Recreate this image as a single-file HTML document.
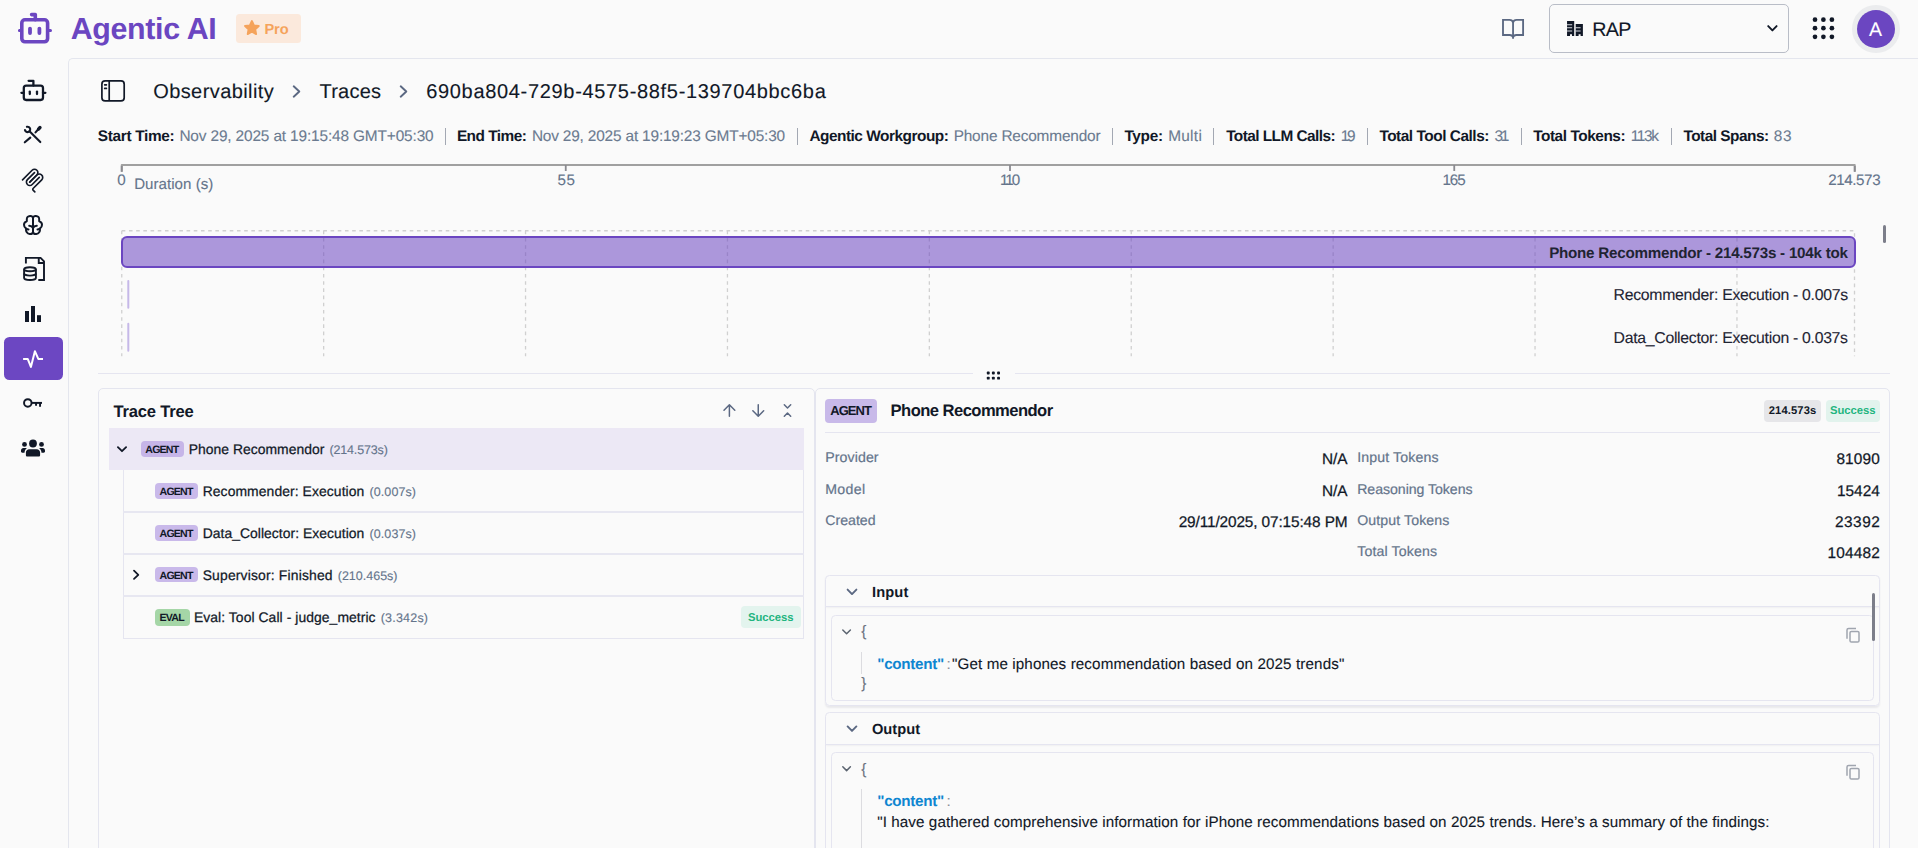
<!DOCTYPE html>
<html><head><meta charset="utf-8"><title>Agentic AI</title>
<style>
html,body{margin:0;padding:0;}
body{width:1918px;height:848px;overflow:hidden;background:#fafafa;font-family:"Liberation Sans", sans-serif;position:relative;}
.t{position:absolute;white-space:pre;font-family:"Liberation Sans", sans-serif;text-rendering:geometricPrecision;}
.a{position:absolute;box-sizing:border-box;}
svg{position:absolute;overflow:visible;}
</style></head><body>
<!-- main content frame -->
<div class="a" style="left:68px;top:58px;width:1860px;height:800px;border-top:1px solid #e4e6ee;border-left:1px solid #e4e6ee;border-top-left-radius:5px;"></div>

<!-- logo -->
<svg style="left:0;top:0" width="70" height="58" viewBox="0 0 70 58" fill="none" stroke="#6b46c1" stroke-width="3.6" stroke-linecap="round" stroke-linejoin="round">
  <rect x="21.8" y="19.8" width="25.8" height="22" rx="3.2"/>
  <path d="M35.3 19.8V14.6H31.6"/>
  <path d="M19.4 30.4h1.9M48.6 30.4h1.9" stroke-width="3"/>
  <path d="M30 28.6v4.4M39.4 28.6v4.4" stroke-width="3.8"/>
</svg>

<!-- Pro badge -->
<div class="a" style="left:236px;top:14px;width:65px;height:28.75px;background:#fbe9dc;border-radius:3.5px;"></div>
<svg style="left:241.5px;top:18.3px" width="19.8" height="19.8" viewBox="0 0 24 24" fill="#f5a35b" stroke="#f5a35b" stroke-width="2.2" stroke-linejoin="round">
  <path d="M12 3.6l2.55 5.3 5.8.8-4.22 4.05 1.02 5.75L12 16.75 6.85 19.5l1.02-5.75L3.65 9.7l5.8-.8z"/>
</svg>

<!-- book icon -->
<svg style="left:1499px;top:15px" width="28" height="28" viewBox="1499 15 28 28" fill="none" stroke="#5b6882" stroke-width="1.85" stroke-linejoin="miter" stroke-linecap="butt">
  <path d="M1513.05 22.4C1512.6 20.7 1511.4 19.9 1509.6 19.9H1503V35H1509.8C1511.4 35 1512.6 35.7 1513.05 37.3"/>
  <path d="M1513.05 22.4C1513.5 20.7 1514.7 19.9 1516.5 19.9H1523.1V35H1516.3C1514.7 35 1513.5 35.7 1513.05 37.3"/>
  <path d="M1513.05 22V38.7"/>
</svg>

<!-- select box -->
<div class="a" style="left:1549px;top:4px;width:240px;height:49px;border:1px solid #b9bdc7;border-radius:5px;"></div>
<!-- building icon -->
<svg style="left:1566px;top:20px" width="18" height="17" viewBox="0 0 18 17">
  <path fill="#111827" d="M1.05 1h7.15v14.9H6v-1.6H4v1.6H1.05zM9.7 4h7.2v11.9h-2.3v-1.6h-2v1.6H9.7z"/>
  <path stroke="#d6d8dd" stroke-width="1.1" d="M1.05 4.75h5.1M1.05 7.8h5.1M1.05 11h5.1M9.2 7.8h5.4M9.2 11h5.4"/>
</svg>
<!-- select chevron -->
<svg style="left:1764px;top:20px" width="17" height="17" viewBox="0 0 17 17" fill="none" stroke="#111827" stroke-width="1.9" stroke-linecap="round" stroke-linejoin="round">
  <path d="M4.2 6.1l4.2 4.3 4.2-4.3"/>
</svg>
<!-- grid dots -->
<svg style="left:1810px;top:15px" width="28" height="28" viewBox="0 0 28 28" fill="#111827">
  <circle cx="5" cy="4.7" r="2.35"/><circle cx="13.4" cy="4.7" r="2.35"/><circle cx="21.9" cy="4.7" r="2.35"/>
  <circle cx="5" cy="13.2" r="2.35"/><circle cx="13.4" cy="13.2" r="2.35"/><circle cx="21.9" cy="13.2" r="2.35"/>
  <circle cx="5" cy="21.8" r="2.35"/><circle cx="13.4" cy="21.8" r="2.35"/><circle cx="21.9" cy="21.8" r="2.35"/>
</svg>
<!-- avatar -->
<div class="a" style="left:1852.3px;top:5.2px;width:47.4px;height:47.4px;border-radius:50%;background:#ebecee;"></div>
<div class="a" style="left:1857px;top:9.9px;width:38px;height:38px;border-radius:50%;background:#6b46c1;"></div>

<!-- ===== sidebar icons ===== -->
<!-- 1 bot (lucide) -->
<svg style="left:18.9px;top:75.9px" width="28.8" height="28.8" viewBox="0 0 24 24" fill="none" stroke="#111827" stroke-width="1.9" stroke-linecap="round" stroke-linejoin="round">
  <path d="M12 8V4H8"/><rect width="16" height="12" x="4" y="8" rx="2"/><path d="M2 14h2"/><path d="M20 14h2"/><path d="M15 13v2"/><path d="M9 13v2"/>
</svg>
<!-- 2 tools -->
<svg style="left:18px;top:120px" width="30" height="30" viewBox="18 120 30 30" fill="none" stroke="#111827" stroke-width="2.1" stroke-linecap="round" stroke-linejoin="round">
  <path d="M26.9 126.85A2.65 2.65 0 1 1 24.95 129.95"/>
  <path d="M29.5 131.3L40.3 142.1"/>
  <path d="M30.3 137.6L24.8 142.3"/>
  <path d="M35.5 132.4L39 128.5"/>
  <path d="M38.5 129.1L40 127.5" stroke-width="3.3"/>
</svg>
<!-- 3 MCP -->
<svg style="left:19.3px;top:165.6px" width="27.5" height="27.5" viewBox="0 0 195 195" fill="none" stroke="#111827" stroke-width="11.6" stroke-linecap="round">
  <path d="M25 97.8528L92.8823 29.9706C102.255 20.598 117.451 20.598 126.823 29.9706C136.196 39.3431 136.196 54.5391 126.823 63.9117L75.5581 115.177"/>
  <path d="M76.2653 114.47L126.823 63.9117C136.196 54.5391 151.392 54.5391 160.765 63.9117L161.118 64.2652C170.491 73.6378 170.491 88.8338 161.118 98.2063L99.7248 159.6C96.6006 162.724 96.6006 167.789 99.7248 170.913L112.331 183.52"/>
  <path d="M109.853 46.9411L59.6482 97.1457C50.2757 106.518 50.2757 121.714 59.6482 131.087C69.0208 140.459 84.2168 140.459 93.5894 131.087L143.794 80.8822"/>
</svg>
<!-- 4 brain -->
<svg style="left:18px;top:210px" width="30" height="30" viewBox="-15 -15 30 30" fill="none" stroke="#111827" stroke-width="2" stroke-linecap="round" stroke-linejoin="round">
  <path d="M0 -7.4V7.4"/>
  <path d="M0 -7.2C0.3 -8.6 1.6 -9.2 3 -9.1C5 -9 6.3 -7.6 6.2 -5.6V-3.8C8 -3.3 9 -1.8 9 -0.2C9 1.6 8.2 2.8 6.9 3.6C7.4 6.4 5.8 8.9 3.3 9.1C1.4 9.2 0.2 8.1 0 7"/>
  <path d="M6.9 3.6C6.2 4 5.4 4.4 4.5 4.5"/>
  <path d="M0 3C0.6 1.6 2 0.9 3.8 0.8"/>
  <path d="M0 -7.2C-0.3 -8.6 -1.6 -9.2 -3 -9.1C-5 -9 -6.3 -7.6 -6.2 -5.6V-3.8C-8 -3.3 -9 -1.8 -9 -0.2C-9 1.6 -8.2 2.8 -6.9 3.6C-7.4 6.4 -5.8 8.9 -3.3 9.1C-1.4 9.2 -0.2 8.1 0 7"/>
  <path d="M-6.9 3.6C-6.2 4 -5.4 4.4 -4.5 4.5"/>
  <path d="M0 3C-0.6 1.6 -2 0.9 -3.8 0.8"/>
</svg>
<!-- 5 file database -->
<svg style="left:18px;top:253px" width="32" height="32" viewBox="18 253 32 32" fill="none" stroke="#111827" stroke-width="1.9" stroke-linecap="butt" stroke-linejoin="miter">
  <path d="M25.9 263.4V257.9H40.6L44 261.3V280H38.3"/>
  <path d="M38.75 257.9V263H44"/>
  <ellipse cx="30" cy="269.3" rx="5.9" ry="2"/>
  <path d="M24.1 269.3V278C24.1 279.1 26.7 280 30 280S35.9 279.1 35.9 278V269.3"/>
  <path d="M24.1 273.6C24.1 274.7 26.7 275.6 30 275.6S35.9 274.7 35.9 273.6"/>
</svg>
<!-- 6 bars -->
<svg style="left:18px;top:298px" width="32" height="32" viewBox="18 298 32 32" fill="#111827">
  <rect x="25" y="311" width="4" height="11"/><rect x="31" y="306" width="4" height="16"/><rect x="37" y="315.2" width="4" height="6.8"/>
</svg>
<!-- 7 active -->
<div class="a" style="left:4px;top:337px;width:59px;height:43px;border-radius:5.5px;background:#6c47c2;"></div>
<svg style="left:18px;top:343px" width="32" height="32" viewBox="18 343 32 32" fill="none" stroke="#ffffff" stroke-width="2" stroke-linecap="butt" stroke-linejoin="round">
  <path d="M23.1 358.9H27.7L30.9 366.9L34.9 351.2L38.3 358.9H43"/>
</svg>
<!-- 8 key -->
<svg style="left:18px;top:387px" width="32" height="32" viewBox="18 387 32 32" fill="none" stroke="#111827" stroke-width="1.95">
  <circle cx="27.8" cy="402.9" r="3.75"/>
  <path d="M31.5 402.9H42"/>
  <path d="M36.05 402.9V405.7M40.05 402.9V406.8"/>
</svg>
<!-- 9 users -->
<svg style="left:18px;top:432px" width="32" height="32" viewBox="18 432 32 32" fill="#111827">
  <circle cx="33" cy="443.5" r="3.9"/>
  <path d="M29.3 449.2h7.4c1.9 0 3.4 1.5 3.4 3.4v2.6c0 .7-.6 1.3-1.3 1.3H27.2c-.7 0-1.3-.6-1.3-1.3v-2.6c0-1.9 1.500-3.4 3.400-3.4z"/>
  <circle cx="24.5" cy="444.45" r="2.4"/><circle cx="41.5" cy="444.45" r="2.4"/>
  <path d="M23.4 448h3.6c-1.300.9-2.200 2.300-2.400 3.900l-.1.850h-2.300c-.66 0-1.200-.54-1.200-1.200v-1.150c0-1.330 1.070-2.400 2.400-2.400z"/>
  <path d="M42.600 448h-3.600c1.300.9 2.200 2.300 2.400 3.900l.1.850h2.300c.66 0 1.200-.54 1.200-1.200v-1.150c0-1.330-1.070-2.400-2.400-2.400z"/>
</svg>

<!-- ===== breadcrumb ===== -->
<svg style="left:98px;top:76px" width="30" height="30" viewBox="98 76 30 30" fill="none" stroke="#111827" stroke-width="1.7" stroke-linecap="round">
  <rect x="101.9" y="80.95" width="22.3" height="20" rx="3.2"/>
  <path d="M109.2 81V101" stroke-linecap="butt"/>
  <path d="M104.7 84.8H106.4M104.7 88.4H106.4"/>
</svg>
<svg style="left:288px;top:82px" width="18" height="20" viewBox="288 82 18 20" fill="none" stroke="#5b6882" stroke-width="1.9" stroke-linecap="round" stroke-linejoin="round">
  <path d="M293.7 86.3L299.3 91.5L293.7 96.7"/>
</svg>
<svg style="left:395px;top:82px" width="18" height="20" viewBox="395 82 18 20" fill="none" stroke="#5b6882" stroke-width="1.9" stroke-linecap="round" stroke-linejoin="round">
  <path d="M400.7 86.3L406.3 91.5L400.7 96.7"/>
</svg>

<!-- meta separators -->
<div class="a" style="left:445px;top:127.5px;width:1px;height:17px;background:#a3a8b3;"></div>
<div class="a" style="left:797px;top:127.5px;width:1px;height:17px;background:#a3a8b3;"></div>
<div class="a" style="left:1112px;top:127.5px;width:1px;height:17px;background:#a3a8b3;"></div>
<div class="a" style="left:1213px;top:127.5px;width:1px;height:17px;background:#a3a8b3;"></div>
<div class="a" style="left:1367px;top:127.5px;width:1px;height:17px;background:#a3a8b3;"></div>
<div class="a" style="left:1520.5px;top:127.5px;width:1px;height:17px;background:#a3a8b3;"></div>
<div class="a" style="left:1670.75px;top:127.5px;width:1px;height:17px;background:#a3a8b3;"></div>

<!-- axis -->
<svg style="left:0;top:0" width="1918" height="400" viewBox="0 0 1918 400" fill="none">
  <path d="M121.75 171.7V165H1854.75V171.7" stroke="#a0a0a0" stroke-width="2" stroke-linejoin="round"/>
  <path d="M565.75 165V171M1010 165V171M1454.25 165V171" stroke="#8a8a90" stroke-width="1.8"/>
  <path d="M121.75 166V171.7M1854.75 166V171.7" stroke="#8a8a90" stroke-width="1.8"/>
  <!-- dashed frame + grid -->
  <path d="M121.75 230.75H1854.5V356.25M121.75 230.75V356.25" stroke="#d0d0d0" stroke-width="1.3" stroke-dasharray="3.6 3.6"/>
  <path d="M323.65 230.75V356.25M525.55 230.75V356.25M727.45 230.75V356.25M929.35 230.75V356.25M1131.25 230.75V356.25M1333.15 230.75V356.25M1535.05 230.75V356.25M1736.95 230.75V356.25" stroke="#d0d0d0" stroke-width="1.3" stroke-dasharray="3.6 3.6"/>
  <!-- small bars -->
  <path d="M128.3 281V307.7M128.3 323.7V350.7" stroke="#c6b8e8" stroke-width="2" stroke-linecap="round"/>
</svg>
<!-- main bar -->
<div class="a" style="left:121px;top:236px;width:1734.5px;height:32px;background:rgba(107,70,193,0.55);border:2px solid #6b46c1;border-radius:6px;"></div>
<!-- gantt scroll thumb -->
<div class="a" style="left:1882.5px;top:225px;width:3px;height:17.5px;background:#7c7e8a;border-radius:1.5px;"></div>

<!-- divider + handle -->
<div class="a" style="left:98px;top:372.5px;width:875px;height:1px;background:#e5e5f0;"></div>
<div class="a" style="left:1014.5px;top:372.5px;width:875px;height:1px;background:#e5e5f0;"></div>
<svg style="left:984px;top:368px" width="20" height="16" viewBox="984 368 20 16" fill="#111827">
  <rect x="986.800" y="371.600" width="2.900" height="2.900" rx="0.9"/><rect x="991.900" y="371.600" width="2.900" height="2.900" rx="0.9"/><rect x="997.100" y="371.600" width="2.900" height="2.900" rx="0.9"/>
  <rect x="986.800" y="376.700" width="2.900" height="2.900" rx="0.9"/><rect x="991.900" y="376.700" width="2.900" height="2.900" rx="0.9"/><rect x="997.100" y="376.700" width="2.900" height="2.900" rx="0.900"/>
</svg>

<!-- ===== trace tree panel ===== -->
<div class="a" style="left:98px;top:388px;width:717px;height:480px;border:1px solid #e4e5ef;border-radius:5px;"></div>
<!-- arrows -->
<svg style="left:718px;top:400px" width="80" height="22" viewBox="718 400 80 22" fill="none" stroke="#5b6882" stroke-width="1.5" stroke-linecap="round" stroke-linejoin="round">
  <path d="M729.400 416.200V404.900M724 410.200L729.400 404.800L734.800 410.200"/>
  <path d="M758.250 404.800V416.100M752.850 410.800L758.250 416.200L763.650 410.800"/>
  <path d="M784.300 404.800L787.500 408L790.700 404.800M784.300 416.200L787.500 413L790.700 416.200"/>
</svg>
<!-- selected row -->
<div class="a" style="left:109px;top:428px;width:694.75px;height:42px;background:#ece8f5;"></div>
<svg style="left:114px;top:441px" width="16" height="16" viewBox="114 441 16 16" fill="none" stroke="#111827" stroke-width="1.8" stroke-linecap="round" stroke-linejoin="round">
  <path d="M117.900 447.100L122 451.200L126.100 447.100"/>
</svg>
<div class="a" style="left:141px;top:441px;width:42.8px;height:15.800px;background:#c6b5e8;border-radius:4px;"></div>
<!-- children container -->
<div class="a" style="left:123px;top:470px;width:681px;height:169px;border-left:1px solid #e5e5f0;border-right:1px solid #e5e5f0;border-bottom:1px solid #e5e5f0;"></div>
<div class="a" style="left:123px;top:511.200px;width:681px;height:2px;background:#e7e7f1;"></div>
<div class="a" style="left:123px;top:553px;width:681px;height:2px;background:#e7e7f1;"></div>
<div class="a" style="left:123px;top:595px;width:681px;height:2px;background:#e7e7f1;"></div>
<div class="a" style="left:155px;top:483px;width:43px;height:15.700px;background:#c9b9ea;border-radius:4px;"></div>
<div class="a" style="left:155px;top:525px;width:43px;height:15.700px;background:#c9b9ea;border-radius:4px;"></div>
<div class="a" style="left:155px;top:566.750px;width:43px;height:15.700px;background:#c9b9ea;border-radius:4px;"></div>
<div class="a" style="left:155px;top:609.250px;width:35px;height:16.500px;background:#a5d6a7;border-radius:4px;"></div>
<svg style="left:128px;top:566px" width="16" height="18" viewBox="128 566 16 18" fill="none" stroke="#111827" stroke-width="1.8" stroke-linecap="round" stroke-linejoin="round">
  <path d="M134 570.700L138.300 574.800L134 578.900"/>
</svg>
<div class="a" style="left:741.200px;top:606px;width:59.500px;height:21.600px;background:#e3f4ee;border-radius:4px;"></div>

<!-- ===== right panel ===== -->
<div class="a" style="left:815px;top:388px;width:1075px;height:480px;border:1px solid #e4e5ef;border-radius:5px;"></div>
<div class="a" style="left:825.2px;top:399.1px;width:51.8px;height:23.6px;background:#c8b9e9;border-radius:4px;"></div>
<div class="a" style="left:1764.2px;top:400px;width:57px;height:22px;background:#e6e6e9;border-radius:4px;"></div>
<div class="a" style="left:1825.8px;top:400px;width:54.2px;height:22px;background:#e2f3ed;border-radius:4px;"></div>
<div class="a" style="left:825px;top:432px;width:1055px;height:1px;background:#e5e5f0;"></div>

<!-- input box -->
<div class="a" style="left:825px;top:575px;width:1055px;height:131px;border:1px solid #e5e5f0;border-radius:4.5px;box-shadow:0 1.5px 2px rgba(20,20,60,0.07);"></div>
<div class="a" style="left:826px;top:606px;width:1053px;height:1px;background:#e5e5f0;box-shadow:0 1px 1.5px rgba(20,20,60,0.05);"></div>
<div class="a" style="left:831px;top:615px;width:1043px;height:86px;border:1px solid #e5e5f0;border-radius:4.5px;"></div>
<svg style="left:844px;top:584px" width="16" height="16" viewBox="844 584 16 16" fill="none" stroke="#5b6882" stroke-width="1.9" stroke-linecap="round" stroke-linejoin="round">
  <path d="M847.600 589.600L852 594.100L856.400 589.600"/>
</svg>
<svg style="left:838px;top:624px" width="18" height="16" viewBox="838 624 18 16" fill="none" stroke="#5b6470" stroke-width="1.5" stroke-linecap="round" stroke-linejoin="round">
  <path d="M842.800 630L846.600 633.800L850.400 630"/>
</svg>
<div class="a" style="left:861px;top:652px;width:1px;height:21.500px;background:#dcdce0;"></div>
<svg style="left:1842px;top:624px" width="24" height="24" viewBox="1842 624 24 24" fill="none" stroke="#a0a5af" stroke-width="1.500" stroke-linejoin="round">
  <path d="M1847 638.700V630.100C1847 629.200 1847.700 628.500 1848.600 628.500H1856"/>
  <rect x="1850" y="631.400" width="9" height="10.700" rx="1.400"/>
</svg>

<!-- output box -->
<div class="a" style="left:825px;top:712px;width:1055px;height:160px;border:1px solid #e5e5f0;border-radius:4.5px;"></div>
<div class="a" style="left:826px;top:744px;width:1053px;height:1px;background:#e5e5f0;box-shadow:0 1px 1.5px rgba(20,20,60,0.05);"></div>
<div class="a" style="left:831px;top:752px;width:1043px;height:120px;border:1px solid #e5e5f0;border-radius:4.5px;"></div>
<svg style="left:844px;top:721px" width="16" height="16" viewBox="844 721 16 16" fill="none" stroke="#5b6882" stroke-width="1.9" stroke-linecap="round" stroke-linejoin="round">
  <path d="M847.600 726.400L852 730.900L856.400 726.400"/>
</svg>
<svg style="left:838px;top:761px" width="18" height="16" viewBox="838 761 18 16" fill="none" stroke="#5b6470" stroke-width="1.5" stroke-linecap="round" stroke-linejoin="round">
  <path d="M842.800 766.800L846.600 770.600L850.400 766.800"/>
</svg>
<div class="a" style="left:861px;top:789px;width:1px;height:70px;background:#dcdce0;"></div>
<svg style="left:1842px;top:761px" width="24" height="24" viewBox="1842 761 24 24" fill="none" stroke="#a0a5af" stroke-width="1.500" stroke-linejoin="round">
  <path d="M1847 775.700V767.100C1847 766.200 1847.700 765.500 1848.600 765.500H1856"/>
  <rect x="1850" y="768.400" width="9" height="10.700" rx="1.400"/>
</svg>
<!-- scroll thumb -->
<div class="a" style="left:1872px;top:593px;width:3px;height:47.600px;background:#7c7e8a;border-radius:1.500px;"></div>

<div class="t" style="left:70.68px;top:11.00px;font-size:30.4px;line-height:36px;font-weight:700;color:#6b46c1;letter-spacing:-0.347px;">Agentic AI</div>
<div class="t" style="left:264.42px;top:21.00px;font-size:14.6px;line-height:18px;font-weight:700;color:#f5a35b;letter-spacing:-0.080px;">Pro</div>
<div class="t" style="left:1592.31px;top:18.00px;font-size:19.7px;line-height:24px;font-weight:400;color:#111827;letter-spacing:-0.704px;-webkit-text-stroke:0.12px currentColor;">RAP</div>
<div class="t" style="left:1868.97px;top:19.00px;font-size:19.5px;line-height:23px;font-weight:400;color:#ffffff;letter-spacing:0.000px;-webkit-text-stroke:0.12px currentColor;">A</div>
<div class="t" style="left:153.20px;top:80.00px;font-size:20.0px;line-height:24px;font-weight:400;color:#111827;letter-spacing:0.416px;-webkit-text-stroke:0.12px currentColor;">Observability</div>
<div class="t" style="left:319.50px;top:80.00px;font-size:20.0px;line-height:24px;font-weight:400;color:#111827;letter-spacing:0.222px;-webkit-text-stroke:0.12px currentColor;">Traces</div>
<div class="t" style="left:426.20px;top:80.00px;font-size:20.0px;line-height:24px;font-weight:400;color:#111827;letter-spacing:0.677px;-webkit-text-stroke:0.12px currentColor;">690ba804-729b-4575-88f5-139704bbc6ba</div>
<div class="t" style="left:97.78px;top:128.00px;font-size:15.4px;line-height:18px;font-weight:700;color:#111827;letter-spacing:-0.328px;">Start Time:</div>
<div class="t" style="left:179.38px;top:128.00px;font-size:15.4px;line-height:18px;font-weight:400;color:#6b7a90;letter-spacing:-0.139px;-webkit-text-stroke:0.12px currentColor;">Nov 29, 2025 at 19:15:48 GMT+05:30</div>
<div class="t" style="left:456.88px;top:128.00px;font-size:15.4px;line-height:18px;font-weight:700;color:#111827;letter-spacing:-0.518px;">End Time:</div>
<div class="t" style="left:531.88px;top:128.00px;font-size:15.4px;line-height:18px;font-weight:400;color:#6b7a90;letter-spacing:-0.170px;-webkit-text-stroke:0.12px currentColor;">Nov 29, 2025 at 19:19:23 GMT+05:30</div>
<div class="t" style="left:809.38px;top:128.00px;font-size:15.4px;line-height:18px;font-weight:700;color:#111827;letter-spacing:-0.480px;">Agentic Workgroup:</div>
<div class="t" style="left:953.63px;top:128.00px;font-size:15.4px;line-height:18px;font-weight:400;color:#6b7a90;letter-spacing:-0.171px;-webkit-text-stroke:0.12px currentColor;">Phone Recommendor</div>
<div class="t" style="left:1124.38px;top:128.00px;font-size:15.4px;line-height:18px;font-weight:700;color:#111827;letter-spacing:-0.294px;">Type:</div>
<div class="t" style="left:1168.13px;top:128.00px;font-size:15.4px;line-height:18px;font-weight:400;color:#6b7a90;letter-spacing:0.308px;-webkit-text-stroke:0.12px currentColor;">Multi</div>
<div class="t" style="left:1226.13px;top:128.00px;font-size:15.4px;line-height:18px;font-weight:700;color:#111827;letter-spacing:-0.549px;">Total LLM Calls:</div>
<div class="t" style="left:1340.63px;top:128.00px;font-size:15.4px;line-height:18px;font-weight:400;color:#6b7a90;letter-spacing:-2.143px;-webkit-text-stroke:0.12px currentColor;">19</div>
<div class="t" style="left:1379.38px;top:128.00px;font-size:15.4px;line-height:18px;font-weight:700;color:#111827;letter-spacing:-0.465px;">Total Tool Calls:</div>
<div class="t" style="left:1494.38px;top:128.00px;font-size:15.4px;line-height:18px;font-weight:400;color:#6b7a90;letter-spacing:-2.143px;-webkit-text-stroke:0.12px currentColor;">31</div>
<div class="t" style="left:1533.13px;top:128.00px;font-size:15.4px;line-height:18px;font-weight:700;color:#111827;letter-spacing:-0.440px;">Total Tokens:</div>
<div class="t" style="left:1630.63px;top:128.00px;font-size:15.4px;line-height:18px;font-weight:400;color:#6b7a90;letter-spacing:-1.334px;-webkit-text-stroke:0.12px currentColor;">113k</div>
<div class="t" style="left:1683.38px;top:128.00px;font-size:15.4px;line-height:18px;font-weight:700;color:#111827;letter-spacing:-0.499px;">Total Spans:</div>
<div class="t" style="left:1773.63px;top:128.00px;font-size:15.4px;line-height:18px;font-weight:400;color:#6b7a90;letter-spacing:0.857px;-webkit-text-stroke:0.12px currentColor;">83</div>
<div class="t" style="left:117.29px;top:172.00px;font-size:15.2px;line-height:18px;font-weight:400;color:#64748b;letter-spacing:0.000px;-webkit-text-stroke:0.12px currentColor;">0</div>
<div class="t" style="left:134.20px;top:176.00px;font-size:15.1px;line-height:18px;font-weight:400;color:#64748b;letter-spacing:0.023px;-webkit-text-stroke:0.12px currentColor;">Duration (s)</div>
<div class="t" style="left:557.39px;top:172.00px;font-size:15.2px;line-height:18px;font-weight:400;color:#64748b;letter-spacing:0.560px;-webkit-text-stroke:0.12px currentColor;">55</div>
<div class="t" style="left:999.89px;top:172.00px;font-size:15.2px;line-height:18px;font-weight:400;color:#64748b;letter-spacing:-2.001px;-webkit-text-stroke:0.12px currentColor;">110</div>
<div class="t" style="left:1442.39px;top:172.00px;font-size:15.2px;line-height:18px;font-weight:400;color:#64748b;letter-spacing:-1.064px;-webkit-text-stroke:0.12px currentColor;">165</div>
<div class="t" style="left:1828.14px;top:172.00px;font-size:15.2px;line-height:18px;font-weight:400;color:#64748b;letter-spacing:-0.407px;-webkit-text-stroke:0.12px currentColor;">214.573</div>
<div class="t" style="left:1549.14px;top:245.00px;font-size:15.2px;line-height:18px;font-weight:700;color:#1f2433;letter-spacing:-0.243px;">Phone Recommendor - 214.573s - 104k tok</div>
<div class="t" style="left:1613.62px;top:286.00px;font-size:15.8px;line-height:19px;font-weight:400;color:#1f2433;letter-spacing:-0.293px;-webkit-text-stroke:0.12px currentColor;">Recommender: Execution - 0.007s</div>
<div class="t" style="left:1613.62px;top:329.00px;font-size:15.8px;line-height:19px;font-weight:400;color:#1f2433;letter-spacing:-0.294px;-webkit-text-stroke:0.12px currentColor;">Data_Collector: Execution - 0.037s</div>
<div class="t" style="left:113.44px;top:402.00px;font-size:16.6px;line-height:20px;font-weight:700;color:#111827;letter-spacing:-0.209px;">Trace Tree</div>
<div class="t" style="left:145.33px;top:444.00px;font-size:10.6px;line-height:13px;font-weight:700;color:#111827;letter-spacing:-0.808px;">AGENT</div>
<div class="t" style="left:188.69px;top:441.00px;font-size:13.9px;line-height:17px;font-weight:400;color:#111827;letter-spacing:0.030px;-webkit-text-stroke:0.25px currentColor;">Phone Recommendor</div>
<div class="t" style="left:329.50px;top:443.00px;font-size:12.5px;line-height:15px;font-weight:400;color:#64748b;letter-spacing:-0.163px;-webkit-text-stroke:0.12px currentColor;">(214.573s)</div>
<div class="t" style="left:159.58px;top:486.00px;font-size:10.6px;line-height:13px;font-weight:700;color:#111827;letter-spacing:-0.808px;">AGENT</div>
<div class="t" style="left:202.69px;top:483.00px;font-size:13.9px;line-height:17px;font-weight:400;color:#111827;letter-spacing:0.085px;-webkit-text-stroke:0.25px currentColor;">Recommender: Execution</div>
<div class="t" style="left:369.50px;top:485.00px;font-size:12.5px;line-height:15px;font-weight:400;color:#64748b;letter-spacing:0.092px;-webkit-text-stroke:0.12px currentColor;">(0.007s)</div>
<div class="t" style="left:159.58px;top:528.00px;font-size:10.6px;line-height:13px;font-weight:700;color:#111827;letter-spacing:-0.808px;">AGENT</div>
<div class="t" style="left:202.69px;top:525.00px;font-size:13.9px;line-height:17px;font-weight:400;color:#111827;letter-spacing:0.042px;-webkit-text-stroke:0.25px currentColor;">Data_Collector: Execution</div>
<div class="t" style="left:369.50px;top:527.00px;font-size:12.5px;line-height:15px;font-weight:400;color:#64748b;letter-spacing:0.092px;-webkit-text-stroke:0.12px currentColor;">(0.037s)</div>
<div class="t" style="left:159.58px;top:570.00px;font-size:10.6px;line-height:13px;font-weight:700;color:#111827;letter-spacing:-0.808px;">AGENT</div>
<div class="t" style="left:202.69px;top:567.00px;font-size:13.9px;line-height:17px;font-weight:400;color:#111827;letter-spacing:0.170px;-webkit-text-stroke:0.25px currentColor;">Supervisor: Finished</div>
<div class="t" style="left:337.75px;top:569.00px;font-size:12.5px;line-height:15px;font-weight:400;color:#64748b;letter-spacing:-0.002px;-webkit-text-stroke:0.12px currentColor;">(210.465s)</div>
<div class="t" style="left:159.58px;top:612.00px;font-size:10.6px;line-height:13px;font-weight:700;color:#111827;letter-spacing:-0.790px;">EVAL</div>
<div class="t" style="left:193.94px;top:609.00px;font-size:13.9px;line-height:17px;font-weight:400;color:#111827;letter-spacing:0.068px;-webkit-text-stroke:0.25px currentColor;">Eval: Tool Call - judge_metric</div>
<div class="t" style="left:380.75px;top:611.00px;font-size:12.5px;line-height:15px;font-weight:400;color:#64748b;letter-spacing:0.199px;-webkit-text-stroke:0.12px currentColor;">(3.342s)</div>
<div class="t" style="left:748.05px;top:611.00px;font-size:11.3px;line-height:14px;font-weight:700;color:#22b57f;letter-spacing:-0.076px;">Success</div>
<div class="t" style="left:830.18px;top:403.00px;font-size:13.0px;line-height:16px;font-weight:700;color:#111827;letter-spacing:-0.915px;">AGENT</div>
<div class="t" style="left:890.59px;top:401.00px;font-size:16.6px;line-height:20px;font-weight:700;color:#111827;letter-spacing:-0.558px;">Phone Recommendor</div>
<div class="t" style="left:1768.75px;top:405.00px;font-size:11.2px;line-height:13px;font-weight:700;color:#111827;letter-spacing:0.118px;">214.573s</div>
<div class="t" style="left:1830.05px;top:404.00px;font-size:11.3px;line-height:14px;font-weight:700;color:#22b57f;letter-spacing:-0.076px;">Success</div>
<div class="t" style="left:825.23px;top:449.00px;font-size:14.15px;line-height:17px;font-weight:400;color:#64748b;letter-spacing:0.097px;-webkit-text-stroke:0.2px currentColor;">Provider</div>
<div class="t" style="left:825.23px;top:481.00px;font-size:14.15px;line-height:17px;font-weight:400;color:#64748b;letter-spacing:0.329px;-webkit-text-stroke:0.2px currentColor;">Model</div>
<div class="t" style="left:825.23px;top:512.00px;font-size:14.15px;line-height:17px;font-weight:400;color:#64748b;letter-spacing:0.003px;-webkit-text-stroke:0.2px currentColor;">Created</div>
<div class="t" style="left:1357.18px;top:449.00px;font-size:14.15px;line-height:17px;font-weight:400;color:#64748b;letter-spacing:0.131px;-webkit-text-stroke:0.2px currentColor;">Input Tokens</div>
<div class="t" style="left:1357.18px;top:481.00px;font-size:14.15px;line-height:17px;font-weight:400;color:#64748b;letter-spacing:-0.047px;-webkit-text-stroke:0.2px currentColor;">Reasoning Tokens</div>
<div class="t" style="left:1357.18px;top:512.00px;font-size:14.15px;line-height:17px;font-weight:400;color:#64748b;letter-spacing:0.100px;-webkit-text-stroke:0.2px currentColor;">Output Tokens</div>
<div class="t" style="left:1357.18px;top:543.00px;font-size:14.15px;line-height:17px;font-weight:400;color:#64748b;letter-spacing:0.138px;-webkit-text-stroke:0.2px currentColor;">Total Tokens</div>
<div class="t" style="left:1321.98px;top:451.00px;font-size:15.4px;line-height:18px;font-weight:400;color:#111827;letter-spacing:-0.012px;-webkit-text-stroke:0.25px currentColor;">N/A</div>
<div class="t" style="left:1321.98px;top:483.00px;font-size:15.4px;line-height:18px;font-weight:400;color:#111827;letter-spacing:-0.012px;-webkit-text-stroke:0.25px currentColor;">N/A</div>
<div class="t" style="left:1178.63px;top:514.00px;font-size:15.4px;line-height:18px;font-weight:400;color:#111827;letter-spacing:-0.124px;-webkit-text-stroke:0.25px currentColor;">29/11/2025, 07:15:48 PM</div>
<div class="t" style="left:1836.38px;top:451.00px;font-size:15.4px;line-height:18px;font-weight:400;color:#111827;letter-spacing:0.167px;-webkit-text-stroke:0.25px currentColor;">81090</div>
<div class="t" style="left:1836.88px;top:483.00px;font-size:15.4px;line-height:18px;font-weight:400;color:#111827;letter-spacing:0.042px;-webkit-text-stroke:0.25px currentColor;">15424</div>
<div class="t" style="left:1834.88px;top:514.00px;font-size:15.4px;line-height:18px;font-weight:400;color:#111827;letter-spacing:0.542px;-webkit-text-stroke:0.25px currentColor;">23392</div>
<div class="t" style="left:1827.38px;top:545.00px;font-size:15.4px;line-height:18px;font-weight:400;color:#111827;letter-spacing:0.225px;-webkit-text-stroke:0.25px currentColor;">104482</div>
<div class="t" style="left:871.91px;top:584.00px;font-size:14.7px;line-height:18px;font-weight:700;color:#111827;letter-spacing:0.146px;">Input</div>
<div class="t" style="left:871.91px;top:721.00px;font-size:14.7px;line-height:18px;font-weight:700;color:#111827;letter-spacing:0.010px;">Output</div>
<div class="t" style="left:861.29px;top:623.00px;font-size:15.2px;line-height:18px;font-weight:400;color:#6b7280;letter-spacing:0.000px;-webkit-text-stroke:0.12px currentColor;">{</div>
<div class="t" style="left:877.29px;top:656.00px;font-size:15.2px;line-height:18px;font-weight:700;color:#0f86d1;letter-spacing:-0.292px;">&quot;content&quot;</div>
<div class="t" style="left:946.39px;top:656.00px;font-size:15.2px;line-height:18px;font-weight:400;color:#8a8f98;letter-spacing:0.000px;-webkit-text-stroke:0.12px currentColor;">:</div>
<div class="t" style="left:951.99px;top:656.00px;font-size:15.2px;line-height:18px;font-weight:400;color:#111827;letter-spacing:0.114px;-webkit-text-stroke:0.12px currentColor;">&quot;Get me iphones recommendation based on 2025 trends&quot;</div>
<div class="t" style="left:861.29px;top:675.00px;font-size:15.2px;line-height:18px;font-weight:400;color:#6b7280;letter-spacing:0.000px;-webkit-text-stroke:0.12px currentColor;">}</div>
<div class="t" style="left:861.29px;top:761.00px;font-size:15.2px;line-height:18px;font-weight:400;color:#6b7280;letter-spacing:0.000px;-webkit-text-stroke:0.12px currentColor;">{</div>
<div class="t" style="left:877.29px;top:793.00px;font-size:15.2px;line-height:18px;font-weight:700;color:#0f86d1;letter-spacing:-0.292px;">&quot;content&quot;</div>
<div class="t" style="left:946.39px;top:793.00px;font-size:15.2px;line-height:18px;font-weight:400;color:#8a8f98;letter-spacing:0.000px;-webkit-text-stroke:0.12px currentColor;">:</div>
<div class="t" style="left:877.19px;top:814.00px;font-size:15.2px;line-height:18px;font-weight:400;color:#111827;letter-spacing:0.088px;-webkit-text-stroke:0.12px currentColor;">&quot;I have gathered comprehensive information for iPhone recommendations based on 2025 trends. Here’s a summary of the findings:</div>
</body></html>
